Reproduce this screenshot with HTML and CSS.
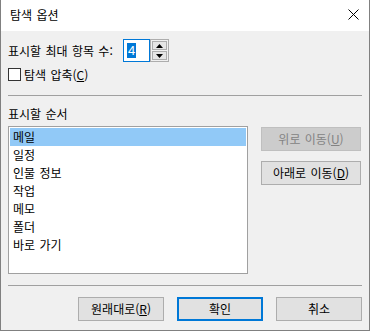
FILE: index.html
```html
<!DOCTYPE html>
<html lang="ko">

<head>
    <meta charset="UTF-8">
    <title>탐색 옵션</title>
    <link rel="stylesheet" href="styles.css">
</head>

<body>
    <div class="dialog">
        <div class="titlebar">
            <span class="title">탐색 옵션</span>
            <svg class="close" width="11" height="11" viewBox="0 0 11 11">
                <path d="M0.5 0.5 L10.5 10.5 M10.5 0.5 L0.5 10.5" stroke="#000" stroke-width="1" fill="none" />
            </svg>
        </div>

        <div class="content">
            <div class="count-row">
                <span>표시할 최대 항목 수:</span>
                <div class="spin">
                    <div class="spin-edit"><span class="spin-sel">4</span></div>
                    <div class="spin-btns">
                        <div class="spin-btn">
                            <svg width="7" height="4" viewBox="0 0 7 4"><path d="M3.5 0 L7 4 L0 4 Z" fill="#000" /></svg>
                        </div>
                        <div class="spin-btn">
                            <svg width="7" height="4" viewBox="0 0 7 4"><path d="M0 0 L7 0 L3.5 4 Z" fill="#000" /></svg>
                        </div>
                    </div>
                </div>
            </div>

            <div class="check-row">
                <span class="checkbox"></span>
                <span>탐색 압축(<u>C</u>)</span>
            </div>

            <div class="sep"></div>

            <div class="order-label">표시할 순서</div>

            <div class="order">
                <ul class="listbox">
                    <li class="selected">메일</li>
                    <li>일정</li>
                    <li>인물 정보</li>
                    <li>작업</li>
                    <li>메모</li>
                    <li>폴더</li>
                    <li>바로 가기</li>
                </ul>
                <div class="side-btns">
                    <button class="btn" disabled>위로 이동(<u>U</u>)</button>
                    <button class="btn">아래로 이동(<u>D</u>)</button>
                </div>
            </div>

            <div class="sep sep-bottom"></div>

            <div class="footer">
                <button class="btn">원래대로(<u>R</u>)</button>
                <button class="btn default">확인</button>
                <button class="btn">취소</button>
            </div>
        </div>
    </div>
</body>

</html>
```

FILE: styles.css
```css
body {
    margin: 0;
    background: #f0f0f0;
    font-family: "Noto Sans CJK KR", "Noto Sans", sans-serif;
    font-size: 12px;
    word-spacing: 1px;
    color: #000;
}

.dialog {
    width: 370px;
    height: 331px;
    box-sizing: border-box;
    border: 1px solid #808080;
    border-top: none;
    background: #f0f0f0;
}

.titlebar {
    height: 31px;
    background: #fff;
    display: flex;
    align-items: center;
    justify-content: space-between;
    padding: 0 10px 0 9px;
}

.title {
    line-height: 16px;
    margin-top: -1px;
}

.close {
    display: block;
    margin-top: -2px;
}

.content {
    padding: 0 7px;
}

/* 최대 항목 수 */
.count-row {
    margin-top: 8px;
    height: 23px;
    display: flex;
    align-items: center;
    line-height: 16px;
}

.count-row > span {
    width: 115px;
    white-space: nowrap;
}

.spin {
    display: flex;
    height: 23px;
}

.spin-edit {
    width: 27px;
    box-sizing: border-box;
    border: 1px solid #0078d7;
    background: #fff;
    padding: 2px 0 0 3px;
}

.spin-sel {
    display: inline-block;
    background: #0078d7;
    color: #fff;
    height: 15px;
    line-height: 15px;
    padding: 0 1px;
    font-family: "Liberation Sans", sans-serif;
    font-size: 13px;
}

.spin-btns {
    width: 19px;
    box-sizing: border-box;
    border: 1px solid #adadad;
    padding: 1px;
    display: flex;
    flex-direction: column;
    gap: 1px;
    background: #f0f0f0;
}

.spin-btn {
    flex: 1;
    border: 1px solid #adadad;
    background: #e5e5e5;
    display: flex;
    align-items: center;
    justify-content: center;
}

.spin-btn svg {
    display: block;
}

/* 탐색 압축 */
.check-row {
    margin-top: 6px;
    height: 13px;
    display: flex;
    align-items: center;
    gap: 3px;
    line-height: 16px;
}

.checkbox {
    width: 13px;
    height: 13px;
    box-sizing: border-box;
    border: 1px solid #333;
    background: #fff;
}

.sep {
    margin-top: 14px;
    height: 1px;
    background: #a0a0a0;
}

.order-label {
    margin-top: 10px;
    line-height: 16px;
    height: 16px;
}

.order {
    margin-top: 4px;
    display: flex;
    gap: 13px;
}

.listbox {
    margin: 0;
    padding: 1px;
    list-style: none;
    width: 240px;
    height: 148px;
    box-sizing: border-box;
    border: 1px solid #a0a0a0;
    background: #fff;
}

.listbox li {
    height: 18px;
    line-height: 18px;
    padding-left: 3px;
}

.listbox li.selected {
    background: #91c9f7;
}

.side-btns {
    margin-top: 1px;
    display: flex;
    flex-direction: column;
    gap: 10px;
}

.btn {
    font-family: "Noto Sans CJK KR", "Noto Sans", sans-serif;
    font-size: 12px;
    word-spacing: 1px;
    line-height: 16px;
    color: #000;
    background: #e1e1e1;
    border: 1px solid #adadad;
    border-radius: 0;
    height: 24px;
    width: 100px;
    padding: 0;
    box-sizing: border-box;
}

.btn:disabled {
    background: #cccccc;
    border-color: #bfbfbf;
    color: #838383;
}

.sep-bottom {
    margin-top: 11px;
}

.footer {
    margin-top: 11px;
    display: flex;
    justify-content: flex-end;
    gap: 13px;
}

.footer .btn {
    width: 86px;
}

.btn.default {
    border: 2px solid #0078d7;
}
```
